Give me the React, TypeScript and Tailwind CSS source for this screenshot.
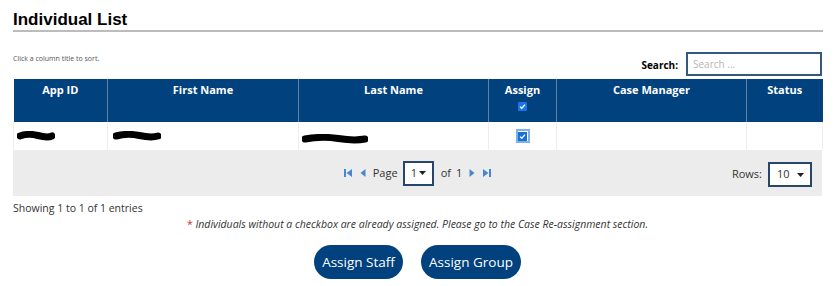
import React from 'react';

const cols = [
  { label: 'App ID', w: 'w-[94px]' },
  { label: 'First Name', w: 'w-[191px]' },
  { label: 'Last Name', w: 'w-[190px]' },
  { label: 'Assign', w: 'w-[68px]' },
  { label: 'Case Manager', w: 'w-[190px]' },
  { label: 'Status', w: 'w-[76px]' },
];

function Scribble({ width }: { width: number }) {
  // redaction marker stroke
  return (
    <svg width={width} height="10" viewBox={`0 0 ${width} 10`} className="block">
      <path
        d={`M3 5 Q ${width * 0.3} 2 ${width * 0.55} 4.5 T ${width - 3} 5`}
        stroke="#000"
        strokeWidth="7"
        strokeLinecap="round"
        fill="none"
      />
    </svg>
  );
}

function NavIcon({ dir, edge }: { dir: 'left' | 'right'; edge?: boolean }) {
  const flip = dir === 'right' ? 'scale(-1,1) translate(-10,0)' : undefined;
  return (
    <svg width="10" height="10" viewBox="0 0 10 10" className="block">
      <g transform={flip}>
        {edge && <rect x="1" y="1" width="2" height="8" fill="#4a86d0" />}
        <path d={edge ? 'M9 1 L3.5 5 L9 9 Z' : 'M7.5 1 L2.5 5 L7.5 9 Z'} fill="#4a86d0" />
      </g>
    </svg>
  );
}

function Caret() {
  return (
    <svg width="7" height="4" viewBox="0 0 7 4" className="block">
      <path d="M0 0 H7 L3.5 4 Z" fill="#222" />
    </svg>
  );
}

function Tick() {
  return (
    <svg width="7" height="7" viewBox="0 0 7 7">
      <path d="M1 3.6 L2.8 5.3 L6 1.6" stroke="#fff" strokeWidth="1.3" fill="none" />
    </svg>
  );
}

export default function App() {
  return (
    <div className="w-[838px] h-[286px] bg-white px-[13px] pt-[10px] font-['Open_Sans',sans-serif] text-[#333]">
      {/* Title */}
      <h2 className="w-[810px] border-b-2 border-[#bcbcbc] font-['Liberation_Sans',Arial,sans-serif] text-[17px] font-bold leading-[20px] text-black">
        Individual List
      </h2>

      {/* Sort hint + search */}
      <div className="mt-[20px] flex w-[809px] items-start justify-between">
        <p className="mt-[2px] text-[7px] leading-[10px] text-[#555]">Click a column title to sort.</p>
        <div className="flex items-center gap-[8px]">
          <span className="mt-[2px] text-[10px] font-bold text-black">Search:</span>
          <div className="flex h-[24px] w-[136px] items-center border-2 border-[#35597a] px-[5px] text-[10px] text-[#b5b5b5]">
            Search ...
          </div>
        </div>
      </div>

      {/* Table */}
      <table className="mt-[3px] w-[809px] table-fixed border-collapse">
        <thead>
          <tr className="h-[43px] bg-[#01417e] text-white">
            {cols.map((c, i) => (
              <th
                key={c.label}
                className={`${c.w} border-[#5f82a8] px-1 pt-[4px] align-top text-[11px] font-bold leading-[14px] ${i > 0 ? 'border-l' : ''}`}
              >
                {c.label}
                {c.label === 'Assign' && (
                  <div className="mt-[5px] flex justify-center">
                    <span className="flex h-[9px] w-[9px] items-center justify-center rounded-[1px] bg-[#1a73e8]">
                      <Tick />
                    </span>
                  </div>
                )}
              </th>
            ))}
          </tr>
        </thead>
        <tbody>
          <tr className="h-[28px] bg-white">
            <td className="border-l border-[#eeeeee] px-[3px]">
              <Scribble width={38} />
            </td>
            <td className="border-l border-[#eeeeee] px-[5px]">
              <Scribble width={48} />
            </td>
            <td className="border-l border-[#eeeeee] px-[3px] pt-[6px]">
              <Scribble width={66} />
            </td>
            <td className="border-l border-[#eeeeee]">
              <div className="flex justify-center">
                <span className="flex h-[14px] w-[14px] items-center justify-center border-2 border-[#7eb2e6] bg-white">
                  <span className="flex h-[9px] w-[9px] items-center justify-center bg-[#1a6fd6]">
                    <Tick />
                  </span>
                </span>
              </div>
            </td>
            <td className="border-l border-[#eeeeee]" />
            <td className="border-x border-[#eeeeee]" />
          </tr>
        </tbody>
      </table>

      {/* Pager */}
      <div className="relative flex h-[46px] w-[809px] items-center justify-center bg-[#ececec] text-[11px] text-[#333]">
        <div className="flex items-center gap-[5px]">
          <NavIcon dir="left" edge />
          <NavIcon dir="left" />
          <span>Page</span>
          <div className="flex h-[25px] w-[31px] items-center justify-between border-2 border-[#27476a] bg-white px-[6px]">
            <span>1</span>
            <Caret />
          </div>
          <span className="ml-[2px]">of</span>
          <span>1</span>
          <NavIcon dir="right" />
          <NavIcon dir="right" edge />
        </div>
        <div className="absolute right-[10px] top-[12px] flex items-center gap-[6px]">
          <span>Rows:</span>
          <div className="flex h-[25px] w-[44px] items-center justify-between border-2 border-[#27476a] bg-white pl-[7px] pr-[6px]">
            <span>10</span>
            <Caret />
          </div>
        </div>
      </div>

      <p className="mt-[4px] text-[10.5px] leading-[16px] text-[#333]">Showing 1 to 1 of 1 entries</p>
      <p className="w-[809px] text-center text-[10.5px] italic leading-[16px] text-[#333]">
        <span className="text-[#c0392b] not-italic">*</span> Individuals without a checkbox are already assigned. Please go to the Case Re-assignment section.
      </p>

      <div className="mt-[13px] flex w-[809px] justify-center gap-[18px]">
        <button className="h-[34px] w-[89px] rounded-full bg-[#01417e] text-[13.5px] text-white">Assign Staff</button>
        <button className="h-[34px] w-[100px] rounded-full bg-[#01417e] text-[13.5px] text-white">Assign Group</button>
      </div>
    </div>
  );
}
